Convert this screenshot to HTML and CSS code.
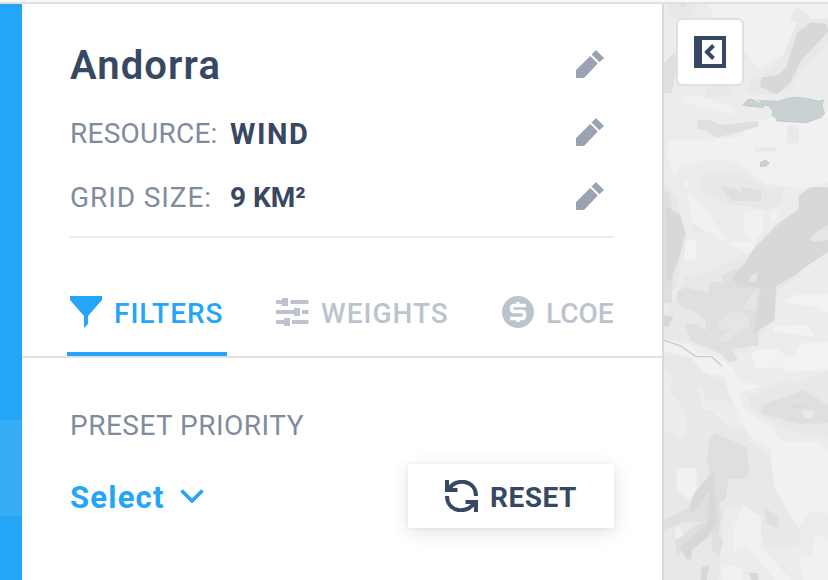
FILE: index.html
```html
<!DOCTYPE html>
<html lang="en">
<head>
<meta charset="utf-8">
<title>Andorra</title>
<link rel="stylesheet" href="styles.css">
</head>
<body>
<svg width="0" height="0" class="defs">
  <symbol id="pencil" viewBox="0 0 28 28"><path d="M0 20 14.200 6 21.800 13.600 8 28H0zM15.500 4.500 20 0 28 8 23.500 12.200z"/></symbol>
</svg>
<div class="topbar"></div>
<div class="app">
  <nav class="rail"><div class="rail-active"></div></nav>
  <main class="panel">
    <header class="summary">
      <div class="row row-title"><h1 class="title">Andorra</h1><svg class="edit"><use href="#pencil"/></svg></div>
      <div class="row row-resource"><span class="label label-resource">RESOURCE:</span><span class="value value-wind">WIND</span><svg class="edit"><use href="#pencil"/></svg></div>
      <div class="row row-grid"><span class="label label-grid">GRID SIZE:</span><span class="value value-km">9 KM²</span><svg class="edit"><use href="#pencil"/></svg></div>
    </header>
    <div class="tabs">
      <div class="tab tab-filters">
        <svg class="icon-funnel" viewBox="0 0 32 32"><path d="M0 0H32V4L18 20V28L14 32V20L0 4z"/></svg>
        <span>FILTERS</span>
      </div>
      <div class="tab tab-weights">
        <svg class="icon-sliders" viewBox="0 0 33 28"><path d="M0 2H6V0H12V8H6V6H0zM14.500 2H32.500V6H14.500zM0 12H18V10H24V18H18V16H0zM26 12H32.500V16H26zM0 22H8V20H14V28H8V26H0zM16 22H32.500V26H16z"/></svg>
        <span>WEIGHTS</span>
      </div>
      <div class="tab tab-lcoe">
        <svg class="icon-coin" viewBox="0 0 32 32"><circle cx="16" cy="16" r="16"/><path class="coin-mark" d="M24 9.500H12Q9.500 9.500 9.500 12V13Q9.500 15.500 12 15.500H20Q22.500 15.500 22.500 18V20Q22.500 22.500 20 22.500H8M16 6V10M16 22V26"/></svg>
        <span>LCOE</span>
      </div>
    </div>
    <section class="preset">
      <div class="preset-label">PRESET PRIORITY</div>
      <div class="controls">
        <div class="select"><span>Select</span><svg class="icon-chevron" viewBox="0 0 24 15"><path d="M1.500 1.500 12 12 22.500 1.500"/></svg></div>
        <button class="reset"><svg class="icon-reset" viewBox="0 0 33 32"><path class="arc" d="M3.500 9.500C10-2.500 31-.5 31 16M2 16C2 32.500 23 34.500 29.500 22.500"/><path d="M0 0H4V6L8 8H12.500V12H0zM33 32H29V26L25 24H20.500V20H33z"/></svg><span>RESET</span></button>
      </div>
    </section>
  </main>
  <section class="map">
    <svg class="terrain" viewBox="27 12 492 1728" preserveAspectRatio="none">
      <path fill="#ececec" d="M0 0H519V1740H0z"/>
      <path fill="#f1f1f1" d="M160 12H519V70L460 62 410 100 385 165 310 205 265 150 200 90zM85 290 120 285 230 320 235 345 85 308zM40 420 150 420 250 410 310 360 400 345 519 330V545L475 560 440 565 330 550 280 510 230 482 150 480 70 500 60 525 35 470zM100 580 160 640 215 725 290 725 300 740 280 760 200 720 110 670z"/>
      <path fill="#e8e8e8" d="M40 12H130L110 55 40 50zM150 265 210 235 240 280 225 290 150 290zM130 525 250 515 330 560 388 560 380 610 340 628 210 612 140 570zM27 545 70 600 75 650 98 700 90 750 60 870H27zM290 230 340 215 385 165 430 60 519 55V130L460 190 400 270 350 285 275 280z"/>
      <path fill="#f1f1f1" d="M270 635 325 630V690L298 728 265 700zM350 632 378 630 350 672z"/>
      <path fill="#dfdfdf" d="M27 190 60 155 66 200 50 280H27zM127 360H165L195 376 310 362V380L185 413 150 390H127zM198 562H240L262 585 258 562 318 571V603H230zM65 12H100L85 24zM27 570 45 580 60 690 50 910H27z"/>
      <path fill="#d8d8d8" d="M320 232 370 225 395 200 425 100 465 67 515 72 519 95 440 180 405 250 365 283 315 260z"/>
      <path fill="#f0f0f0" d="M90 538 102 545V568L85 560zM470 500 510 480V530L480 540z"/>
      <path fill="#e9e9e9" d="M425 18 475 60 450 80 405 60zM397 377H432V430H397zM300 442H365V455H300zM115 670 150 690 140 700H112z"/>
      <path fill="#c9d1d2" stroke="#b5c1c1" stroke-width="2" d="M264 314 280 298 294 299 307 307 326 315 325 323 303 320 277 318zM311 301 370 304 400 294 430 292 465 297 489 304 506 300 501 318 509 339 499 352 454 368 365 363 362 351 352 347 353 331 340 318 327 315zM315 487 325 484 332 480 342 489 335 498 317 500z"/>
      <g transform="translate(0 870)">
        <path fill="#e8e8e8" d="M65 10 90-40 155-50 280-110 450-85 430-40 370 0 350 100 310 150 280 185 180 190 110 155 27 145 40 60zM27 190 110 205 145 250 205 270 250 380 290 460 345 495 360 600 440 720 430 765 340 780 270 645 210 650 190 870H27zM280 320 380 275 430 280 519 240V445L410 425 290 360z"/>
        <path fill="#dfdfdf" d="M320 345 445 300 519 345V400L430 402 320 370zM165 445 180 430 275 470 282 540 275 567H222L210 630 190 640 200 670 190 740 204 750 192 800 170 780V710L100 760 65 800 60 750 140 695 85 695 27 720V690L100 655 120 610 165 550 155 505zM328 655 368 675V713L335 700z"/>
        <path fill="#d8d8d8" d="M105 650 120 605 178 545 180 620 187 700 155 745 110 780 108 808H95L75 770 155 705 165 600 110 670zM27 75 55 80 40 110H27zM280 848 310 850V870H290zM140 830 163 825 155 870H137z"/>
        <path fill="#f1f1f1" d="M27 150 110 165 125 190 180 195 230 230 250 270 320 290 250 305 270 360 350 410 380 457 490 455 519 480V670L465 665 430 714 360 600 345 475 290 445 250 380 205 255 155 252 110 205 27 180zM65 535 125 533V600L100 630 65 600zM235 715 265 645 318 680V775L410 870H360L275 768 235 785zM430 800H470L480 730 519 750V870H445zM195 835 225 825 260 835 265 870H205zM58 720 75 710 85 735 65 748z"/>
        <path fill="#ededed" d="M27 235 50 260 45 310 75 340 100 400 85 450 27 420zM125 290 145 290 150 330 210 330 250 375 270 410 220 410 190 385 165 360 145 360z"/>
        <path fill="#d8d8d8" d="M408 357 418 341 454 350 430 352z"/>
        <path fill="#e9e9e9" d="M441 360 473 363V384H452z"/>
      </g>
      <g transform="translate(21 540)">
        <path fill="#dfdfdf" d="M45 335 70 322 140 340V305H182V285L240 260 300 320 288 498 210 505 228 543 200 545 165 512 88 485 68 432 100 430 132 452 130 420 100 395 50 375z"/>
        <path fill="#d8d8d8" d="M12 80 55 105 70 160 50 240 22 310 12 290zM498 22H444L410 47V87L350 130 280 200 240 260 210 292 228 322H298L275 460 338 420 342 320 400 285 430 262 470 235 498 215z"/>
        <path fill="#e5e5e5" d="M440 180 470 150 498 135V180L460 185zM262 290 288 275 282 305H262zM245 385 265 345 288 332 278 390zM168 430 205 395 235 392 262 415 262 440 225 455 190 485 167 480 205 450 168 447z"/>
        <path fill="#f2f2f2" d="M360 365 400 345 498 342V400L460 380zM335 438 435 435 460 470 335 455zM265 520 290 508H345L375 532 400 520 415 490 498 485V570L370 575 350 560 285 568zM75 180 102 178V245L65 235z"/>
      </g>
      <path class="river" d="M20 1019 75 1037 123 1070H170L200 1097"/>
    </svg>
    <button class="collapse"><svg viewBox="0 0 32 32" class="icon-collapse"><path fill-rule="evenodd" d="M0 0H32V32H0zM8 4V28H28V4z"/><path class="caret" d="M19.500 9.500 13 16 19.500 22.500"/></svg></button>
  </section>
</div>
</body>
</html>
```
FILE: styles.css
```css
* { box-sizing: border-box; }
body { margin: 0; width: 828px; height: 580px; overflow: hidden; background: #fff; color: #374863; font: 400 28px/32px Roboto, "Liberation Sans", sans-serif; }
svg { display: block; flex: none; fill: currentColor; }
.defs { position: absolute; }
.topbar { height: 4px; background: #f8f8f8; border-bottom: 2px solid #e0e0e0; }
.app { display: flex; height: 576px; }
.rail { width: 22px; padding-top: 416px; background: #24a5f7; }
.rail-active { height: 96px; background: #37adf7; }
.panel { width: 642px; border-right: 2px solid #dadade; }
.summary { width: 544px; height: 234px; margin-left: 48px; border-bottom: 2px solid #ebebf2; }
.row { display: flex; align-items: center; }
.row-title { height: 94px; padding-top: 28px; }
.row-resource { height: 72px; }
.row-grid { height: 56px; }
.title { margin: 0; padding-top: 2px; font-size: 40px; line-height: 48px; font-weight: 600; letter-spacing: 1.100px; }
.edit { width: 28px; height: 28px; margin: 0 10px 2px auto; color: #99a3b2; }
.row-resource .edit, .row-grid .edit { margin-bottom: 4px; }
.label { width: 160px; color: #7f8c9f; white-space: nowrap; }
.label-resource { letter-spacing: .25px; }
.label-grid { letter-spacing: .9px; }
.value { font-weight: 700; white-space: nowrap; }
.value-wind { font-size: 29px; letter-spacing: 1.600px; }
.tabs { display: flex; height: 120px; border-bottom: 2px solid #e0e0e6; font-weight: 500; color: #bdc3ce; }
.tab { display: flex; align-items: center; height: 118px; padding-top: 32px; }
.tab span { padding-top: 2px; }
.tab-filters { width: 160px; margin-left: 45px; padding: 36px 0 0 3px; color: #24a5f7; border-bottom: 4px solid #24a5f7; letter-spacing: 1px; }
.tab-filters svg { margin-bottom: 2px; }
.tab-weights { width: 226px; padding-left: 49px; letter-spacing: 1px; }
.tab-weights svg { margin-bottom: 2px; }
.tab-lcoe { padding-left: 49px; }
.tab-lcoe svg { margin-bottom: 2px; }
.icon-funnel { width: 32px; height: 32px; margin-right: 12px; }
.icon-sliders { width: 33px; height: 28px; margin-right: 12px; }
.icon-coin { width: 32px; height: 32px; margin-right: 12px; }
.coin-mark { fill: none; stroke: #fff; stroke-width: 3.400; }
.preset { padding: 52px 48px 0; }
.preset-label { height: 54px; color: #7f8c9f; letter-spacing: .48px; white-space: nowrap; }
.controls { display: flex; align-items: center; justify-content: space-between; height: 64px; }
.select { display: flex; align-items: center; color: #24a5f7; font-size: 31px; font-weight: 700; letter-spacing: 1.200px; }
.select span { padding-top: 3px; }
.icon-chevron { width: 24px; height: 15px; margin: 0 0 0 15px; fill: none; stroke: currentColor; stroke-width: 3.700; }
button { border: 0; color: inherit; font: inherit; background: #fff; }
.reset { display: flex; align-items: center; width: 206px; height: 64px; padding: 0 0 0 37px; font-weight: 700; letter-spacing: .5px; box-shadow: 0 4px 16px rgba(55, 72, 99, .16), 0 0 3px rgba(55, 72, 99, .08); }
.reset span { padding-top: 3px; }
.icon-reset { width: 33px; height: 32px; margin-right: 12px; }
.arc { fill: none; stroke: currentColor; stroke-width: 4; }
.map { position: relative; width: 164px; height: 576px; }
.terrain { width: 164px; height: 576px; }
.river { fill: none; stroke: #c5cfce; stroke-width: 4; }
.collapse { position: absolute; top: 14px; left: 12px; width: 68px; height: 68px; padding: 16px; border: 2px solid #e0e0e2; border-radius: 6px; background-clip: padding-box; }
.icon-collapse { width: 32px; height: 32px; }
.caret { fill: none; stroke: currentColor; stroke-width: 4; }
```
